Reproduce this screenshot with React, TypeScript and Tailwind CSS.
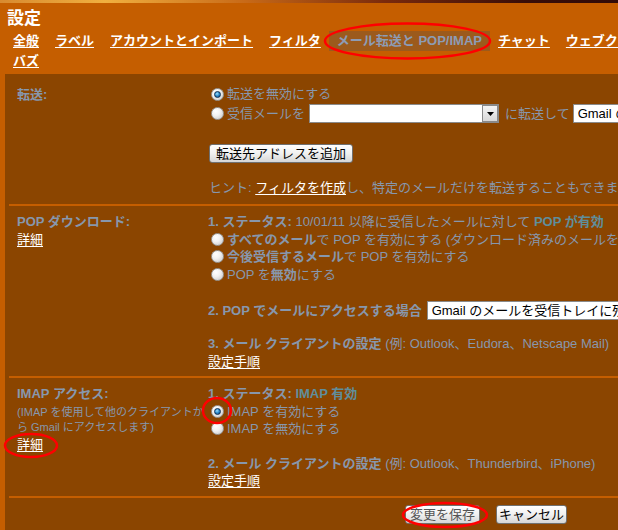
import React from "react";

const FONT = { fontFamily: '"Liberation Sans", "Noto Sans CJK JP", Arial, sans-serif' };

function Radio({ checked = false }: { checked?: boolean }) {
  return (
    <span className="relative inline-flex items-center justify-center w-[13px] h-[13px] rounded-full border border-[#9a9a9a] bg-[radial-gradient(circle_at_35%_30%,#ffffff_0%,#f2f2f2_40%,#c4c4c4_100%)] mr-[3px] shrink-0">
      {checked && (
        <span className="w-[7px] h-[7px] rounded-full border border-[#0d2f55] bg-[radial-gradient(circle_at_40%_35%,#9ee0ff_0%,#2a88c8_50%,#0b3f78_100%)]" />
      )}
    </span>
  );
}

function Btn({ children, className = "" }: { children: React.ReactNode; className?: string }) {
  return (
    <span
      className={
        "inline-flex items-center justify-center h-[19px] rounded-[3px] border border-[#707070] bg-[linear-gradient(#ffffff,#f0f0f0_50%,#d6d6d6)] text-[13px] leading-none whitespace-nowrap shrink-0 " +
        className
      }
    >
      {children}
    </span>
  );
}

function SelectBox({ width, text = "", arrow = true }: { width: number; text?: string; arrow?: boolean }) {
  return (
    <span
      className="inline-flex items-center h-[19px] border border-[#8a8a8a] bg-white text-black text-[13px] leading-none overflow-hidden shrink-0"
      style={{ width }}
    >
      <span className="flex-1 pl-[4px] whitespace-nowrap">{text}</span>
      {arrow && (
        <span className="flex items-center justify-center w-[16px] h-[17px] border border-[#8a8a8a] bg-[linear-gradient(#f4f4f4,#d8d8d8)]">
          <svg width="7" height="4" viewBox="0 0 7 4">
            <path d="M0 0 H7 L3.5 4 Z" fill="#000" />
          </svg>
        </span>
      )}
    </span>
  );
}

const gray = "text-[#8797ad]";
const teal = "text-[#5f8e9c]";
const link = "text-white underline underline-offset-2";
const labelCell = "w-[199px] shrink-0 pl-[8px] pt-[7px] ";

export default function App() {
  const tabs = ["全般", "ラベル", "アカウントとインポート", "フィルタ", "メール転送と POP/IMAP", "チャット", "ウェブクリップ", "バズ"];
  return (
    <div className="relative w-[618px] h-[530px] overflow-hidden bg-[#c55e00]" style={FONT}>
      <div className="w-[700px]">
        {/* textured header strip */}
        <div className="h-[3px] bg-[linear-gradient(90deg,#d88a30,#f0b040_15%,#c86a18_35%,#7a2a0c_55%,#3a0e08_75%,#2a0808)]" />

        <div className="pl-[7px] pt-[5px] text-[17px] leading-[22px] font-bold text-white">設定</div>

        <div className="mt-[1px] pl-[5px] w-[690px] flex flex-wrap text-[13px] leading-[20px] font-bold">
          {tabs.map((t) =>
            t === "メール転送と POP/IMAP" ? (
              <span key={t} className="px-[8px] bg-[#9c5a1c] text-[#8d9cb5] whitespace-nowrap">
                {t}
              </span>
            ) : (
              <span key={t} className="px-[8px] whitespace-nowrap">
                <span className="text-white underline underline-offset-2">{t}</span>
              </span>
            )
          )}
        </div>

        {/* settings panel */}
        <div className="mt-[3px] ml-[5px] bg-[#8b4500] pt-[5px] pl-[4px] text-[13px] h-[460px]">
          {/* forwarding */}
          <div className="flex border-b-2 border-[#c55e00]">
            <div className={labelCell + "leading-[18px] font-bold " + gray}>転送:</div>
            <div className={"flex-1 pt-[6px] pb-[7px] leading-[18px] whitespace-nowrap " + gray}>
              <div className="flex items-center h-[18px] pl-[3px]">
                <Radio checked />
                転送を無効にする
              </div>
              <div className="flex items-center h-[21px] pl-[3px]">
                <Radio />
                受信メールを
                <span className="ml-[4px] flex">
                  <SelectBox width={190} />
                </span>
                <span className="ml-[6px] mr-[3px]">に転送して</span>
                <SelectBox width={140} text="Gmail のメールを受信トレイに残す" arrow={false} />
              </div>
              <div className="mt-[20px] pl-[1px] flex">
                <Btn className="px-[6px] text-black">転送先アドレスを追加</Btn>
              </div>
              <div className="mt-[16px] pl-[1px]">
                ヒント: <span className={link}>フィルタを作成</span>し、特定のメールだけを転送することもできます。
              </div>
            </div>
          </div>

          {/* POP */}
          <div className="flex border-b-2 border-[#c55e00]">
            <div className={labelCell + "leading-[17.5px] " + gray}>
              <div className="font-bold">POP ダウンロード:</div>
              <div className={link + " w-fit"}>詳細</div>
            </div>
            <div className={"flex-1 pt-[7px] pb-[6px] leading-[17.5px] whitespace-nowrap " + gray}>
              <div>
                <span className="font-bold">1. ステータス: </span>10/01/11 以降に受信したメールに対して{" "}
                <span className={"font-bold " + teal}>POP が有効</span>
              </div>
              <div className="flex items-center pl-[3px]">
                <Radio />
                <span className="font-bold">すべてのメール</span>で POP を有効にする (ダウンロード済みのメールを含む)
              </div>
              <div className="flex items-center pl-[3px]">
                <Radio />
                <span className="font-bold">今後受信するメール</span>で POP を有効にする
              </div>
              <div className="flex items-center pl-[3px]">
                <Radio />
                POP を<span className="font-bold">無効</span>にする
              </div>
              <div className="mt-[18px] flex items-center h-[19px]">
                <span className="font-bold mr-[5px]">2. POP でメールにアクセスする場合</span>
                <SelectBox width={260} text="Gmail のメールを受信トレイに残す" arrow={false} />
              </div>
              <div className="mt-[15px]">
                <span className="font-bold">3. メール クライアントの設定</span> (例: Outlook、Eudora、Netscape Mail)
              </div>
              <div className={link + " w-fit"}>設定手順</div>
            </div>
          </div>

          {/* IMAP */}
          <div className="flex border-b-2 border-[#c55e00]">
            <div className={labelCell + "leading-[17.5px] " + gray}>
              <div className="font-bold">IMAP アクセス:</div>
              <div className="mt-[2px] text-[11px] leading-[15.5px]">
                (IMAP を使用して他のクライアントから Gmail にアクセスします)
              </div>
              <div className={link + " w-fit"}>詳細</div>
            </div>
            <div className={"flex-1 pt-[7px] pb-[6px] leading-[17.5px] whitespace-nowrap " + gray}>
              <div>
                <span className="font-bold">1. ステータス: </span>
                <span className={"font-bold " + teal}>IMAP 有効</span>
              </div>
              <div className="flex items-center pl-[3px]">
                <Radio checked />
                IMAP を有効にする
              </div>
              <div className="flex items-center pl-[3px]">
                <Radio />
                IMAP を無効にする
              </div>
              <div className="mt-[17px]">
                <span className="font-bold">2. メール クライアントの設定</span> (例: Outlook、Thunderbird、iPhone)
              </div>
              <div className={link + " w-fit"}>設定手順</div>
            </div>
          </div>

          {/* actions */}
          <div className="flex gap-[16px] pl-[396px] pt-[7px]">
            <Btn className="w-[75px] text-[#555]">変更を保存</Btn>
            <Btn className="w-[71px] text-black">キャンセル</Btn>
          </div>
        </div>
      </div>

      {/* red hand-drawn highlight marks */}
      <svg className="absolute inset-0 pointer-events-none" width="618" height="530">
        <ellipse cx="407.5" cy="41" rx="82.5" ry="17.5" fill="none" stroke="#ff0000" strokeWidth="2.5" />
        <ellipse cx="217" cy="410.5" rx="14" ry="12.5" fill="none" stroke="#ff0000" strokeWidth="2.5" />
        <ellipse cx="31" cy="445.5" rx="26" ry="11.5" fill="none" stroke="#ff0000" strokeWidth="2.5" />
        <ellipse cx="445" cy="515" rx="42" ry="12" fill="none" stroke="#ff0000" strokeWidth="2.5" />
      </svg>
    </div>
  );
}
